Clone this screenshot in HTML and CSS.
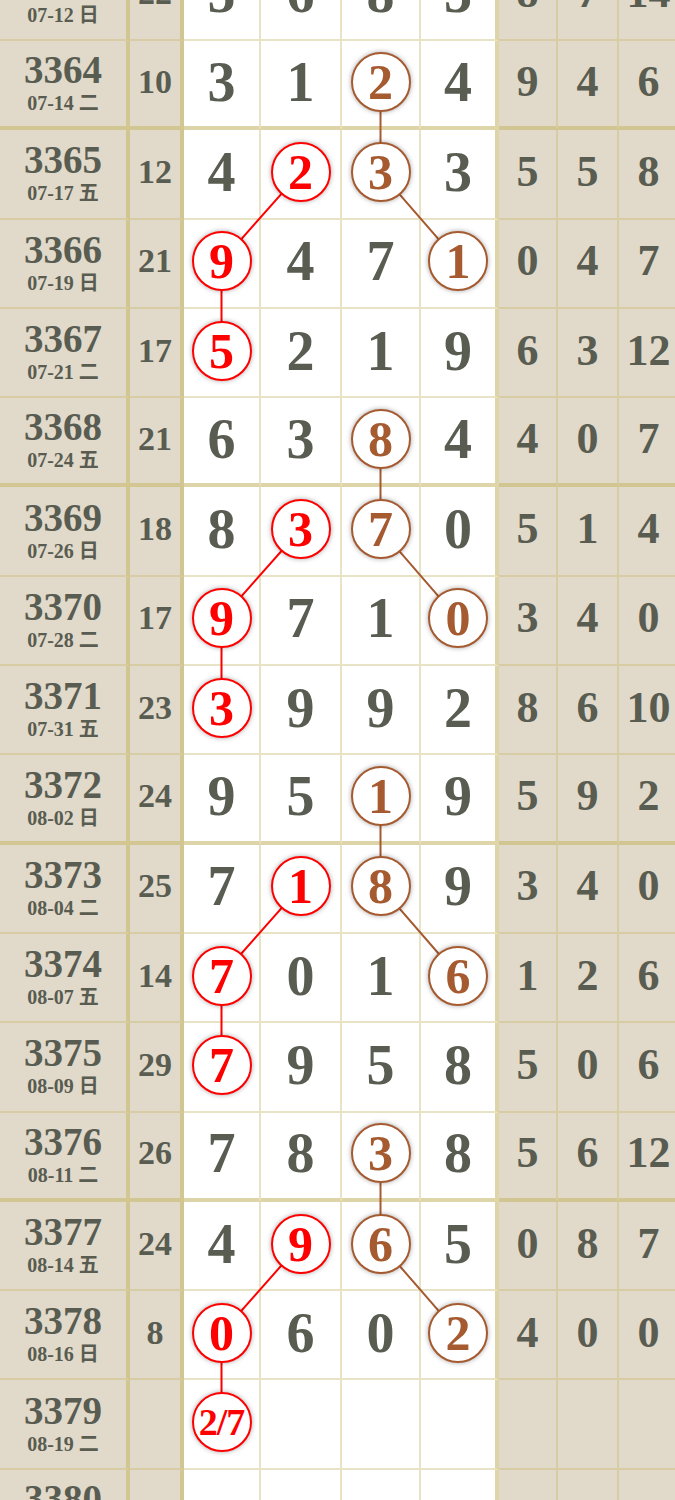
FILE: index.html
```html
<!DOCTYPE html>
<html>
<head>
  <meta charset="utf-8">
  <title>走势图</title>
  <link rel="stylesheet" href="styles.css">
</head>
<body>
<div class="screen">
  <div class="board">

    <div class="row">
      <div class="cell issue"><span class="no">3363</span><span class="date">07-12 日</span></div>
      <div class="cell sum">22</div>
      <div class="cell n">5</div>
      <div class="cell n">6</div>
      <div class="cell n">8</div>
      <div class="cell n edge">3</div>
      <div class="cell m">8</div>
      <div class="cell m">7</div>
      <div class="cell m">14</div>
    </div>

    <div class="row quad">
      <div class="cell issue"><span class="no">3364</span><span class="date">07-14 二</span></div>
      <div class="cell sum">10</div>
      <div class="cell n">3</div>
      <div class="cell n">1</div>
      <div class="cell n"><span class="ball brown">2</span></div>
      <div class="cell n edge">4</div>
      <div class="cell m">9</div>
      <div class="cell m">4</div>
      <div class="cell m">6</div>
    </div>

    <div class="row">
      <div class="cell issue"><span class="no">3365</span><span class="date">07-17 五</span></div>
      <div class="cell sum">12</div>
      <div class="cell n">4</div>
      <div class="cell n"><span class="ball red">2</span></div>
      <div class="cell n"><span class="ball brown">3</span></div>
      <div class="cell n edge">3</div>
      <div class="cell m">5</div>
      <div class="cell m">5</div>
      <div class="cell m">8</div>
    </div>

    <div class="row">
      <div class="cell issue"><span class="no">3366</span><span class="date">07-19 日</span></div>
      <div class="cell sum">21</div>
      <div class="cell n"><span class="ball red">9</span></div>
      <div class="cell n">4</div>
      <div class="cell n">7</div>
      <div class="cell n edge"><span class="ball brown">1</span></div>
      <div class="cell m">0</div>
      <div class="cell m">4</div>
      <div class="cell m">7</div>
    </div>

    <div class="row">
      <div class="cell issue"><span class="no">3367</span><span class="date">07-21 二</span></div>
      <div class="cell sum">17</div>
      <div class="cell n"><span class="ball red">5</span></div>
      <div class="cell n">2</div>
      <div class="cell n">1</div>
      <div class="cell n edge">9</div>
      <div class="cell m">6</div>
      <div class="cell m">3</div>
      <div class="cell m">12</div>
    </div>

    <div class="row quad">
      <div class="cell issue"><span class="no">3368</span><span class="date">07-24 五</span></div>
      <div class="cell sum">21</div>
      <div class="cell n">6</div>
      <div class="cell n">3</div>
      <div class="cell n"><span class="ball brown">8</span></div>
      <div class="cell n edge">4</div>
      <div class="cell m">4</div>
      <div class="cell m">0</div>
      <div class="cell m">7</div>
    </div>

    <div class="row">
      <div class="cell issue"><span class="no">3369</span><span class="date">07-26 日</span></div>
      <div class="cell sum">18</div>
      <div class="cell n">8</div>
      <div class="cell n"><span class="ball red">3</span></div>
      <div class="cell n"><span class="ball brown">7</span></div>
      <div class="cell n edge">0</div>
      <div class="cell m">5</div>
      <div class="cell m">1</div>
      <div class="cell m">4</div>
    </div>

    <div class="row">
      <div class="cell issue"><span class="no">3370</span><span class="date">07-28 二</span></div>
      <div class="cell sum">17</div>
      <div class="cell n"><span class="ball red">9</span></div>
      <div class="cell n">7</div>
      <div class="cell n">1</div>
      <div class="cell n edge"><span class="ball brown">0</span></div>
      <div class="cell m">3</div>
      <div class="cell m">4</div>
      <div class="cell m">0</div>
    </div>

    <div class="row">
      <div class="cell issue"><span class="no">3371</span><span class="date">07-31 五</span></div>
      <div class="cell sum">23</div>
      <div class="cell n"><span class="ball red">3</span></div>
      <div class="cell n">9</div>
      <div class="cell n">9</div>
      <div class="cell n edge">2</div>
      <div class="cell m">8</div>
      <div class="cell m">6</div>
      <div class="cell m">10</div>
    </div>

    <div class="row quad">
      <div class="cell issue"><span class="no">3372</span><span class="date">08-02 日</span></div>
      <div class="cell sum">24</div>
      <div class="cell n">9</div>
      <div class="cell n">5</div>
      <div class="cell n"><span class="ball brown">1</span></div>
      <div class="cell n edge">9</div>
      <div class="cell m">5</div>
      <div class="cell m">9</div>
      <div class="cell m">2</div>
    </div>

    <div class="row">
      <div class="cell issue"><span class="no">3373</span><span class="date">08-04 二</span></div>
      <div class="cell sum">25</div>
      <div class="cell n">7</div>
      <div class="cell n"><span class="ball red">1</span></div>
      <div class="cell n"><span class="ball brown">8</span></div>
      <div class="cell n edge">9</div>
      <div class="cell m">3</div>
      <div class="cell m">4</div>
      <div class="cell m">0</div>
    </div>

    <div class="row">
      <div class="cell issue"><span class="no">3374</span><span class="date">08-07 五</span></div>
      <div class="cell sum">14</div>
      <div class="cell n"><span class="ball red">7</span></div>
      <div class="cell n">0</div>
      <div class="cell n">1</div>
      <div class="cell n edge"><span class="ball brown">6</span></div>
      <div class="cell m">1</div>
      <div class="cell m">2</div>
      <div class="cell m">6</div>
    </div>

    <div class="row">
      <div class="cell issue"><span class="no">3375</span><span class="date">08-09 日</span></div>
      <div class="cell sum">29</div>
      <div class="cell n"><span class="ball red">7</span></div>
      <div class="cell n">9</div>
      <div class="cell n">5</div>
      <div class="cell n edge">8</div>
      <div class="cell m">5</div>
      <div class="cell m">0</div>
      <div class="cell m">6</div>
    </div>

    <div class="row quad">
      <div class="cell issue"><span class="no">3376</span><span class="date">08-11 二</span></div>
      <div class="cell sum">26</div>
      <div class="cell n">7</div>
      <div class="cell n">8</div>
      <div class="cell n"><span class="ball brown">3</span></div>
      <div class="cell n edge">8</div>
      <div class="cell m">5</div>
      <div class="cell m">6</div>
      <div class="cell m">12</div>
    </div>

    <div class="row">
      <div class="cell issue"><span class="no">3377</span><span class="date">08-14 五</span></div>
      <div class="cell sum">24</div>
      <div class="cell n">4</div>
      <div class="cell n"><span class="ball red">9</span></div>
      <div class="cell n"><span class="ball brown">6</span></div>
      <div class="cell n edge">5</div>
      <div class="cell m">0</div>
      <div class="cell m">8</div>
      <div class="cell m">7</div>
    </div>

    <div class="row">
      <div class="cell issue"><span class="no">3378</span><span class="date">08-16 日</span></div>
      <div class="cell sum">8</div>
      <div class="cell n"><span class="ball red">0</span></div>
      <div class="cell n">6</div>
      <div class="cell n">0</div>
      <div class="cell n edge"><span class="ball brown">2</span></div>
      <div class="cell m">4</div>
      <div class="cell m">0</div>
      <div class="cell m">0</div>
    </div>

    <div class="row">
      <div class="cell issue"><span class="no">3379</span><span class="date">08-19 二</span></div>
      <div class="cell sum"></div>
      <div class="cell n"><span class="ball red pair">2/7</span></div>
      <div class="cell n"></div>
      <div class="cell n"></div>
      <div class="cell n edge"></div>
      <div class="cell m"></div>
      <div class="cell m"></div>
      <div class="cell m"></div>
    </div>

    <div class="row quad">
      <div class="cell issue"><span class="no">3380</span><span class="date">08-21 四</span></div>
      <div class="cell sum"></div>
      <div class="cell n"></div>
      <div class="cell n"></div>
      <div class="cell n"></div>
      <div class="cell n edge"></div>
      <div class="cell m"></div>
      <div class="cell m"></div>
      <div class="cell m"></div>
    </div>

    <!-- connecting lines, drawn under the balls -->
    <svg class="links" width="680" height="1608" viewBox="0 0 680 1608">
      <g class="red-line">
        <polyline points="300.5,220.3 221.5,309.6 221.5,398.9"/>
        <polyline points="300.5,577.5 221.5,666.8 221.5,756.1"/>
        <polyline points="300.5,934.7 221.5,1024 221.5,1113.3"/>
        <polyline points="300.5,1291.9 221.5,1381.2 221.5,1470.5"/>
      </g>
      <g class="brown-line">
        <polyline points="380.5,130 380.5,220.3 458,309.6"/>
        <polyline points="380.5,487.2 380.5,577.5 458,666.8"/>
        <polyline points="380.5,844.4 380.5,934.7 458,1024"/>
        <polyline points="380.5,1201.6 380.5,1291.9 458,1381.2"/>
      </g>
    </svg>

  </div>
</div>
</body>
</html>
```

FILE: styles.css
```css
html, body {
  margin: 0;
  padding: 0;
}

body {
  background-color: #ffffff;
  color: #585c51;
  font-family: "Liberation Serif", "Noto Sans CJK SC", serif;
}

.screen {
  width: 675px;
  height: 1500px;
  overflow: hidden;
}

.board {
  position: relative;
  width: 680px;
  margin-top: -48.3px;
}

.row {
  display: grid;
  grid-template-columns: 130px 54px 77px 81px 79px 78px 59px 61px 61px;
  height: 89.3px;
}

.cell {
  box-sizing: border-box;
  display: flex;
  align-items: center;
  justify-content: center;
  padding-bottom: 4px;
  font-weight: bold;
  line-height: 1;
  background-color: #ffffff;
  border-right: 2px solid rgba(200, 185, 110, 0.4);
  border-bottom: 2px solid rgba(200, 185, 110, 0.4);
}

.row.quad .cell {
  border-bottom: 4px solid rgba(200, 185, 110, 0.6);
}

.issue,
.sum,
.m {
  background-color: #e1d9c9;
}

.issue,
.sum,
.edge {
  border-right: 4px solid rgba(200, 185, 110, 0.6);
}

.issue {
  flex-direction: column;
}

.issue .no {
  font-size: 39px;
}

.issue .date {
  margin-top: 4px;
  font-size: 20px;
}

.sum {
  font-size: 34px;
}

.n {
  font-size: 56px;
}

.m {
  font-size: 44px;
}

.ball {
  position: relative;
  z-index: 2;
  box-sizing: border-box;
  width: 60px;
  height: 60px;
  display: flex;
  align-items: center;
  justify-content: center;
  border: 2.5px solid;
  border-radius: 50%;
  background-color: #ffffff;
  font-size: 50px;
  box-shadow: 0 0 5px rgba(0, 0, 0, 0.35);
}

.ball.red {
  color: #ff0000;
  border-color: #ff0000;
}

.ball.brown {
  color: #a55a30;
  border-color: #a55a30;
}

.ball.pair {
  font-size: 38px;
  letter-spacing: -1px;
}

.links {
  position: absolute;
  top: 0;
  left: 0;
  z-index: 1;
  pointer-events: none;
}

.links polyline {
  fill: none;
  stroke-width: 2;
}

.red-line polyline {
  stroke: #ff0000;
}

.brown-line polyline {
  stroke: #a55a30;
}
```
